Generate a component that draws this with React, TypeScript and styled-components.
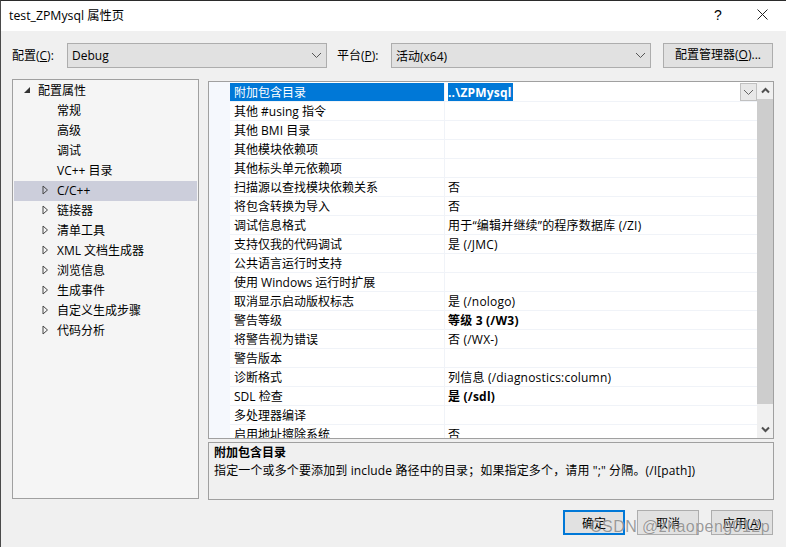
import styled, { createGlobalStyle } from "styled-components";

const GlobalStyle = createGlobalStyle`
  html, body {
    margin: 0;
    padding: 0;
    background: #f0f0f0;
  }
  * {
    box-sizing: border-box;
  }
`;

const Dialog = styled.div`
  width: 786px;
  height: 547px;
  display: flex;
  flex-direction: column;
  position: relative;
  overflow: hidden;
  background: #f0f0f0;
  border-top: 1px solid #2b2b2b;
  border-left: 1px solid #4a4a4a;
  color: #000;
  font-family: "Open Sans", "Noto Sans CJK SC", sans-serif;
  font-size: 12px;
`;

const TitleBar = styled.div`
  height: 30px;
  flex: none;
  background: #fff;
  display: flex;
  align-items: center;
  padding: 0 18px 3px 8px;
  font-size: 12.3px;
`;

const Title = styled.span`
  flex: 1;
`;

const TitleButtons = styled.div`
  display: flex;
  align-items: center;
  gap: 33px;
`;

const HelpMark = styled.span`
  font-size: 14px;
  width: 10px;
  font-family: "Liberation Sans", sans-serif;
`;

const ConfigBar = styled.div`
  flex: none;
  display: flex;
  align-items: center;
  height: 24px;
  margin-top: 12px;
  padding: 0 12px 0 11px;
`;

const FieldLabel = styled.label<{ $width: number; $indent?: number }>`
  width: ${(p) => p.$width}px;
  padding-left: ${(p) => p.$indent ?? 0}px;
  flex: none;
`;

const Combo = styled.div`
  width: 260px;
  height: 25px;
  margin-top: 1px;
  flex: none;
  display: flex;
  align-items: center;
  justify-content: space-between;
  padding: 0 4px;
  background: #e1e1e1;
  border: 1px solid #adadad;
`;

const GhostButton = styled.button<{ $default?: boolean }>`
  height: 25px;
  background: #e1e1e1;
  border: ${(p) => (p.$default ? "2px solid #0078d7" : "1px solid #adadad")};
  padding: 0;
  font: inherit;
  color: #000;
`;

const ManagerButton = styled(GhostButton)`
  width: 110px;
  margin-left: 12px;
  padding-bottom: 2px;
  flex: none;
`;

const Main = styled.div`
  flex: none;
  display: flex;
  gap: 9px;
  height: 421px;
  margin-top: 12px;
  padding: 0 12px 0 11px;
`;

const Tree = styled.div`
  width: 187px;
  height: 420px;
  background: #f5f5f5;
  border: 1px solid #a0a0a0;
  padding: 1px;
`;

const TreeRow = styled.div<{ $depth: number; $selected?: boolean }>`
  height: 20px;
  display: flex;
  align-items: center;
  padding-bottom: 2px;
  background: ${(p) => (p.$selected ? "#cccedb" : "transparent")};
  padding-left: ${(p) => (p.$depth === 0 ? 9 : 28)}px;
`;

const TreeArrow = styled.span`
  width: 15px;
  flex: none;
  display: flex;
  align-items: center;
`;

const RightPane = styled.div`
  width: 566px;
  display: flex;
  flex-direction: column;
  margin-top: 2px;
`;

const Grid = styled.div`
  height: 358px;
  flex: none;
  display: flex;
  margin-bottom: 3px;
  background: #fff;
  border: 1px solid #a0a0a0;
  overflow: hidden;
`;

const Gutter = styled.div`
  width: 21px;
  flex: none;
  background: #f5f8fd;
`;

const Rows = styled.div`
  flex: 1;
  padding-top: 1px;
  min-width: 0;
`;

const Row = styled.div`
  height: 19px;
  display: flex;
  border-bottom: 1px solid #f0f3f8;
`;

const NameCell = styled.div<{ $active?: boolean }>`
  width: 214px;
  flex: none;
  padding-left: 4px;
  line-height: 20px;
  white-space: nowrap;
  background: ${(p) => (p.$active ? "#0078d7" : "transparent")};
  color: ${(p) => (p.$active ? "#fff" : "#000")};
`;

const ValueCell = styled.div<{ $bold?: boolean }>`
  flex: 1;
  position: relative;
  padding-left: 3px;
  line-height: 20px;
  letter-spacing: 0.2px;
  white-space: nowrap;
  border-left: 1px solid #f0f3f8;
  font-weight: ${(p) => (p.$bold ? 700 : 400)};
`;

const SelectedText = styled.span`
  display: inline-block;
  height: 18px;
  background: #0078d7;
  color: #fff;
  font-weight: 700;
  padding-right: 1px;
`;

const CellDrop = styled.span`
  position: absolute;
  top: 0;
  right: 0;
  width: 17px;
  height: 18px;
  background: #e8e8e8;
  border: 1px solid #c0c0c0;
  display: flex;
  align-items: center;
  justify-content: center;
`;

const ScrollBar = styled.div`
  width: 16px;
  flex: none;
  background: #f0f0f0;
  display: flex;
  flex-direction: column;
`;

const ScrollEnd = styled.div`
  height: 17px;
  flex: none;
  display: flex;
  align-items: center;
  justify-content: center;
`;

const ScrollThumb = styled.div`
  height: 305px;
  flex: none;
  background: #cdcdcd;
`;

const ScrollTrack = styled.div`
  flex: 1;
`;

const Description = styled.div`
  height: 58px;
  flex: none;
  border: 1px solid #a0a0a0;
  padding: 1px 5px;
  line-height: 18px;
`;

const DescriptionTitle = styled.div`
  font-weight: 700;
`;

const DescriptionBody = styled.div`
  letter-spacing: 0.13px;
`;

const Footer = styled.div`
  flex: none;
  display: flex;
  justify-content: flex-end;
  gap: 12px;
  margin-top: 10px;
  padding-right: 13px;
`;

const FooterButton = styled(GhostButton)`
  width: 62px;
`;

const Watermark = styled.div`
  position: absolute;
  left: 589px;
  top: 517px;
  font-family: "Liberation Sans", sans-serif;
  font-size: 16px;
  letter-spacing: 0.45px;
  color: rgba(90, 90, 90, 0.6);
  text-shadow: 0 0 1px rgba(255, 255, 255, 0.7);
  white-space: nowrap;
  pointer-events: none;
`;

function Chevron({ color = "#555" }: { color?: string }) {
  return (
    <svg width="11" height="7" viewBox="0 0 11 7">
      <path d="M1 1l4.5 4.5L10 1" fill="none" stroke={color} strokeWidth="1" />
    </svg>
  );
}

function BoldChevron({ up }: { up?: boolean }) {
  return (
    <svg width="9" height="7" viewBox="0 0 9 7">
      <path
        d={up ? "M1 5.5l3.5-3.5L8 5.5" : "M1 1.5L4.5 5 8 1.5"}
        fill="none"
        stroke="#505050"
        strokeWidth="2"
      />
    </svg>
  );
}

function ExpandArrow({ open }: { open?: boolean }) {
  if (open) {
    return (
      <svg width="8" height="8" viewBox="0 0 8 8">
        <path d="M7 1v6H1z" fill="#333" />
      </svg>
    );
  }
  return (
    <svg width="7" height="10" viewBox="0 0 7 10">
      <path d="M1 1l4.5 4L1 9z" fill="none" stroke="#444" strokeWidth="1" />
    </svg>
  );
}

const treeItems = [
  { label: "常规" },
  { label: "高级" },
  { label: "调试" },
  { label: "VC++ 目录" },
  { label: "C/C++", arrow: true, selected: true },
  { label: "链接器", arrow: true },
  { label: "清单工具", arrow: true },
  { label: "XML 文档生成器", arrow: true },
  { label: "浏览信息", arrow: true },
  { label: "生成事件", arrow: true },
  { label: "自定义生成步骤", arrow: true },
  { label: "代码分析", arrow: true },
];

const rows: { name: string; value?: string; bold?: boolean }[] = [
  { name: "其他 #using 指令" },
  { name: "其他 BMI 目录" },
  { name: "其他模块依赖项" },
  { name: "其他标头单元依赖项" },
  { name: "扫描源以查找模块依赖关系", value: "否" },
  { name: "将包含转换为导入", value: "否" },
  { name: "调试信息格式", value: "用于“编辑并继续”的程序数据库 (/ZI)" },
  { name: "支持仅我的代码调试", value: "是 (/JMC)" },
  { name: "公共语言运行时支持" },
  { name: "使用 Windows 运行时扩展" },
  { name: "取消显示启动版权标志", value: "是 (/nologo)" },
  { name: "警告等级", value: "等级 3 (/W3)", bold: true },
  { name: "将警告视为错误", value: "否 (/WX-)" },
  { name: "警告版本" },
  { name: "诊断格式", value: "列信息 (/diagnostics:column)" },
  { name: "SDL 检查", value: "是 (/sdl)", bold: true },
  { name: "多处理器编译" },
  { name: "启用地址擦除系统", value: "否" },
];

export default function App() {
  return (
    <Dialog>
      <GlobalStyle />
      <TitleBar>
        <Title>test_ZPMysql 属性页</Title>
        <TitleButtons>
          <HelpMark>?</HelpMark>
          <svg width="11" height="11" viewBox="0 0 11 11">
            <path d="M.5.5l10 10M10.5.5l-10 10" stroke="#222" strokeWidth="1" />
          </svg>
        </TitleButtons>
      </TitleBar>
      <ConfigBar>
        <FieldLabel $width={55}>
          配置(<u>C</u>):
        </FieldLabel>
        <Combo>
          Debug
          <Chevron />
        </Combo>
        <FieldLabel $width={64} $indent={10}>
          平台(<u>P</u>):
        </FieldLabel>
        <Combo>
          活动(x64)
          <Chevron />
        </Combo>
        <ManagerButton>
          配置管理器(<u>O</u>)...
        </ManagerButton>
      </ConfigBar>
      <Main>
        <Tree>
          <TreeRow $depth={0}>
            <TreeArrow>
              <ExpandArrow open />
            </TreeArrow>
            配置属性
          </TreeRow>
          {treeItems.map((item) => (
            <TreeRow key={item.label} $depth={1} $selected={item.selected}>
              <TreeArrow>{item.arrow && <ExpandArrow />}</TreeArrow>
              {item.label}
            </TreeRow>
          ))}
        </Tree>
        <RightPane>
          <Grid>
            <Gutter />
            <Rows>
              <Row>
                <NameCell $active>附加包含目录</NameCell>
                <ValueCell>
                  <SelectedText>..\ZPMysql</SelectedText>
                  <CellDrop>
                    <Chevron color="#666" />
                  </CellDrop>
                </ValueCell>
              </Row>
              {rows.map((row) => (
                <Row key={row.name}>
                  <NameCell>{row.name}</NameCell>
                  <ValueCell $bold={row.bold}>{row.value}</ValueCell>
                </Row>
              ))}
            </Rows>
            <ScrollBar>
              <ScrollEnd>
                <BoldChevron up />
              </ScrollEnd>
              <ScrollThumb />
              <ScrollTrack />
              <ScrollEnd>
                <BoldChevron />
              </ScrollEnd>
            </ScrollBar>
          </Grid>
          <Description>
            <DescriptionTitle>附加包含目录</DescriptionTitle>
            <DescriptionBody>
              指定一个或多个要添加到 include 路径中的目录；如果指定多个，请用 ";" 分隔。(/I[path])
            </DescriptionBody>
          </Description>
        </RightPane>
      </Main>
      <Footer>
        <FooterButton $default>确定</FooterButton>
        <FooterButton>取消</FooterButton>
        <FooterButton>
          应用(<u>A</u>)
        </FooterButton>
      </Footer>
      <Watermark>CSDN @zhaopeng012p</Watermark>
    </Dialog>
  );
}
